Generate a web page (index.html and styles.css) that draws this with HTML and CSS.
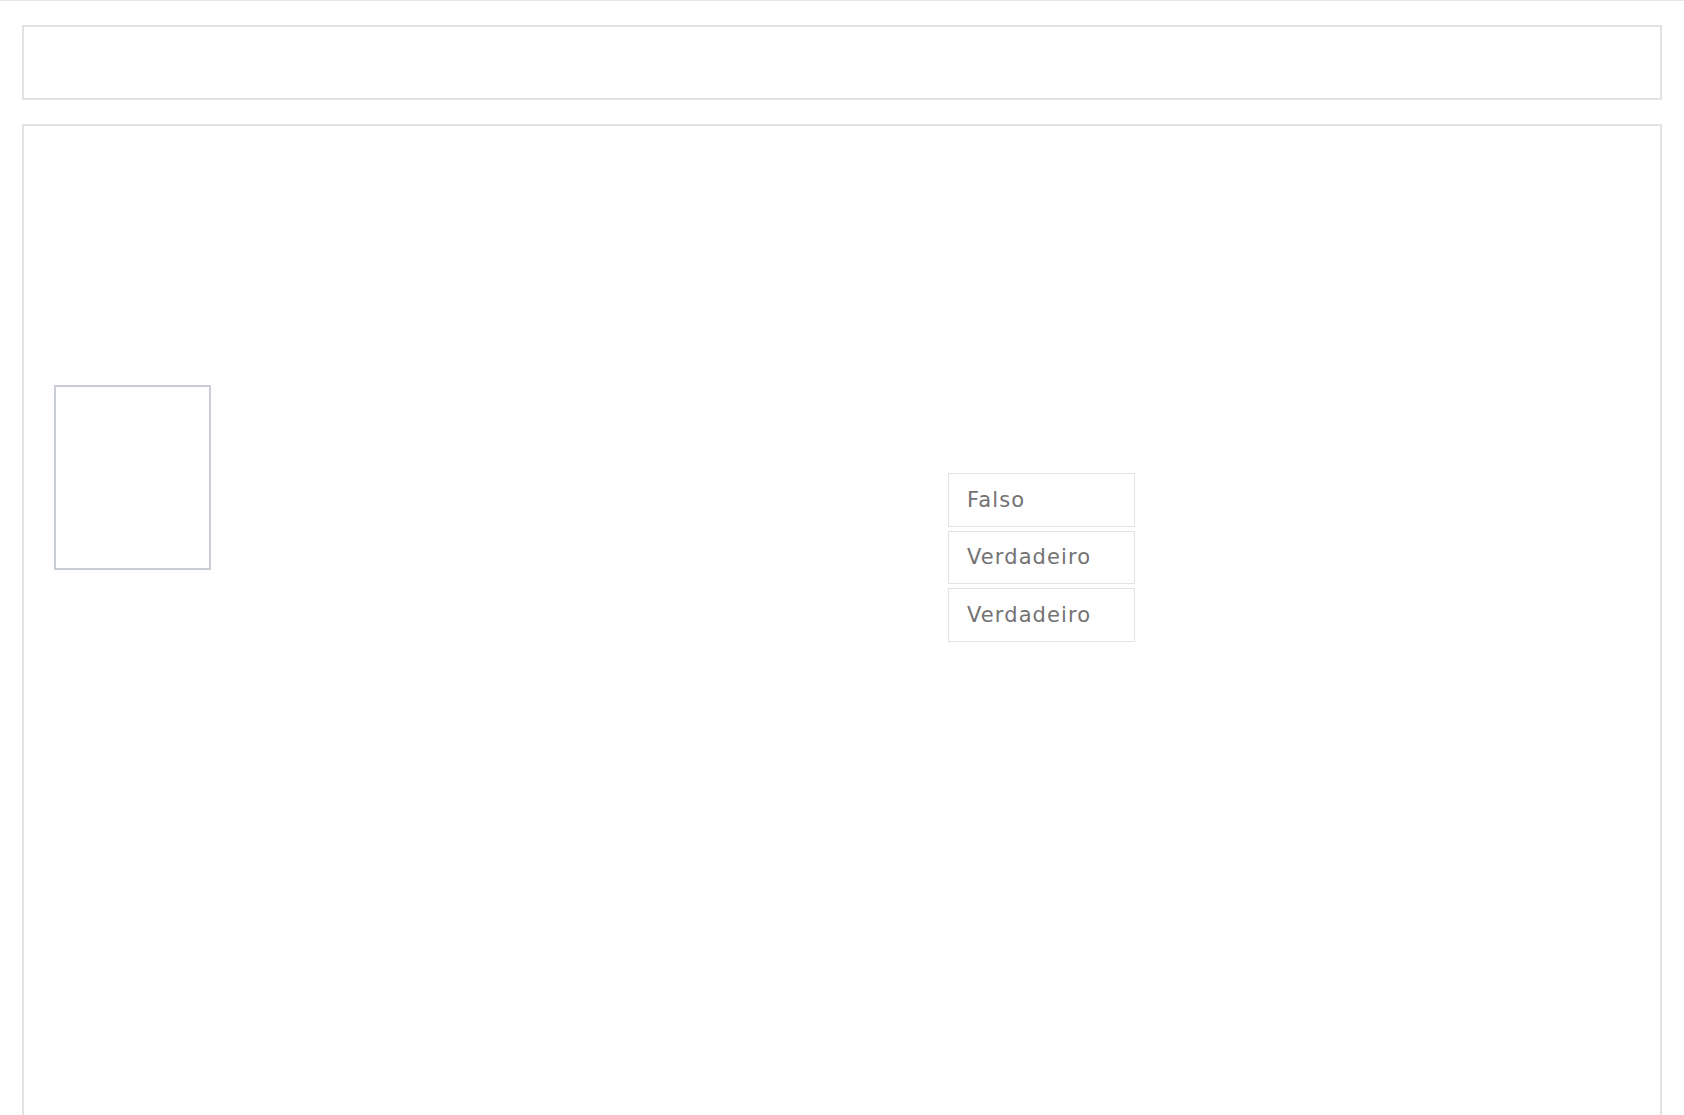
FILE: index.html
```html
<!DOCTYPE html>
<html lang="pt">
<head>
<meta charset="utf-8">
<title>Quiz</title>
<link rel="stylesheet" href="styles.css">
</head>
<body>
<div class="page">
  <div class="header"></div>
  <div class="main">
    <div class="row">
      <div class="picture"></div>
      <div class="options">
        <div class="option">Falso</div>
        <div class="option">Verdadeiro</div>
        <div class="option">Verdadeiro</div>
      </div>
    </div>
  </div>
</div>
</body>
</html>
```
FILE: styles.css
```css
html, body {
  margin: 0;
  padding: 0;
  background: #ffffff;
  font-family: "DejaVu Sans", "Liberation Sans", sans-serif;
}
body {
  border-top: 1px solid #e6e6e6;
  height: 1114px;
  overflow: hidden;
}
.page {
  padding: 24px 22px 0 22px;
  display: flex;
  flex-direction: column;
  gap: 24px;
}
.header {
  height: 71px;
  border: 2px solid #e2e2e2;
}
.main {
  height: 1100px;
  border: 2px solid #e2e2e2;
  border-bottom: none;
}
.row {
  display: flex;
  align-items: flex-start;
  padding: 259px 0 0 30px;
}
.picture {
  width: 153px;
  height: 181px;
  border: 2px solid #c9cdd6;
  flex: none;
}
.options {
  margin-left: 737px;
  margin-top: 88px;
  display: flex;
  flex-direction: column;
  gap: 4px;
}
.option {
  width: 150px;
  height: 51.5px;
  border: 1px solid #e3e3e3;
  padding: 0 17px 0 18px;
  display: flex;
  align-items: center;
  font-size: 21px;
  color: #737373;
  letter-spacing: 1.1px;
}
```
